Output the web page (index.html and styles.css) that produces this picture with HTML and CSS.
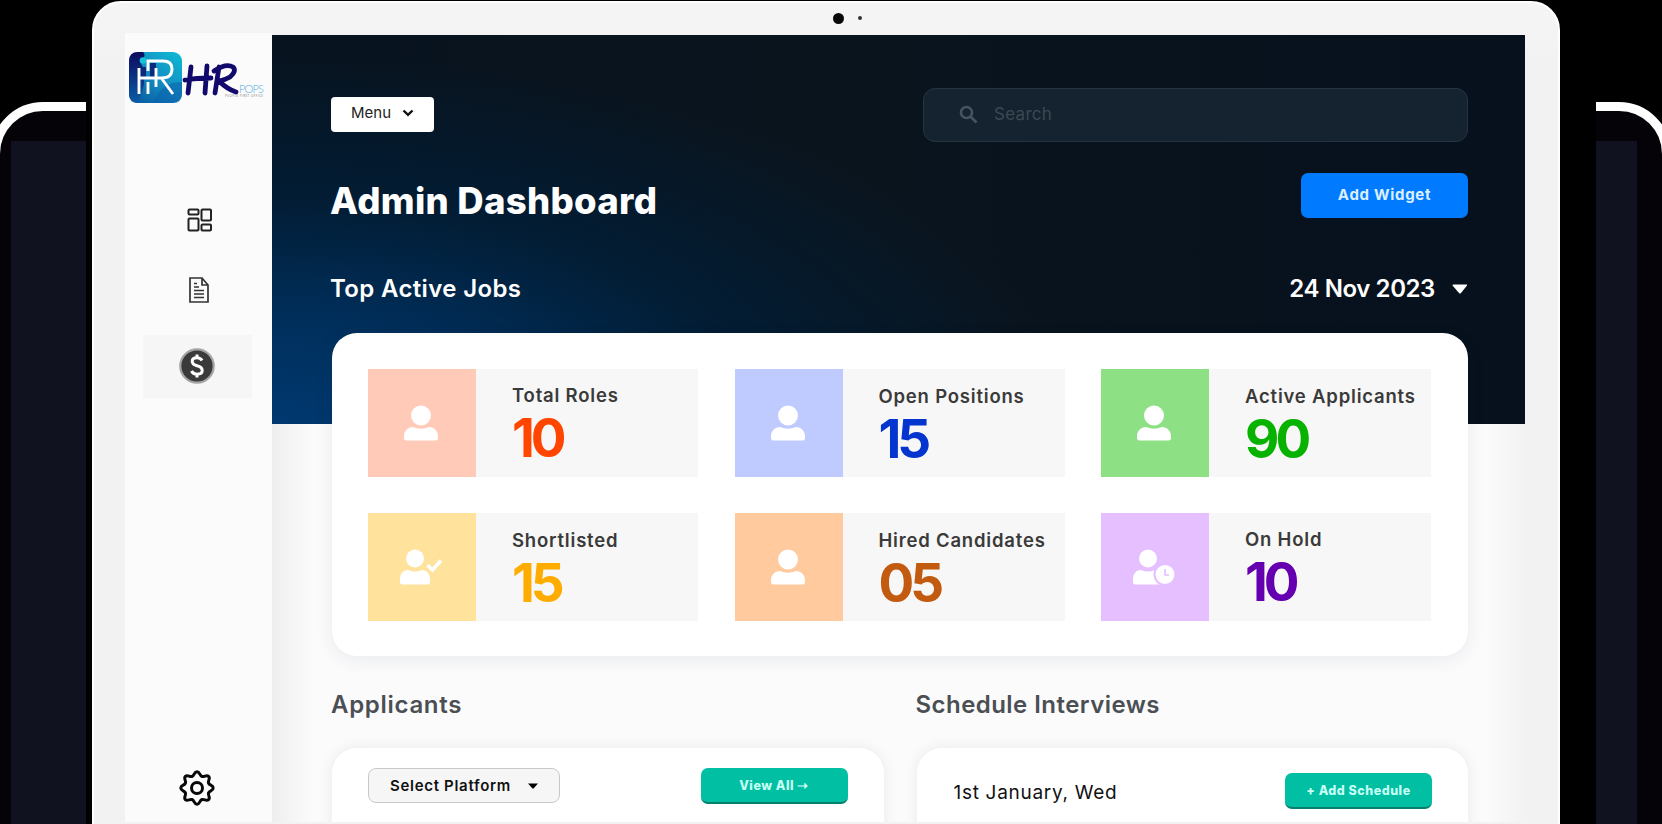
FILE: index.html
```html
<!DOCTYPE html>
<html lang="en">
<head>
<meta charset="utf-8">
<title>Admin Dashboard</title>
<link rel="stylesheet" href="styles.css">
</head>
<body>
<svg class="defs" width="0" height="0">
  <symbol id="user" viewBox="0 0 36 36">
    <circle cx="18" cy="10.500" r="10"/>
    <path d="M1 33V31C1 26 5 22 10 22Q18 25.500 26 22C31 22 35 26 35 31V33Q35 35.500 32.500 35.500H3.500Q1 35.500 1 33Z"/>
  </symbol>
</svg>
<div class="stage">
  <div class="device device-left"><div class="shell"><div class="panel"></div></div></div>
  <div class="monitor">
    <div class="camera"><i class="lens"></i><i class="sensor"></i></div>
    <div class="screen">
      <aside class="sidebar">
        <svg class="logo" viewBox="0 0 140 54" width="140" height="54">
          <defs>
            <linearGradient id="lg" x1="1" y1="0" x2="0.2" y2="1"><stop offset="0" stop-color="#0bbcd4"/><stop offset="0.5" stop-color="#1491c4"/><stop offset="1" stop-color="#0a5da3"/></linearGradient>
            <linearGradient id="dk" x1="0" y1="0" x2="0" y2="1"><stop offset="0" stop-color="#0c0a60"/><stop offset="1" stop-color="#0b5ca5"/></linearGradient>
          </defs>
          <rect x="1" y="1" width="53" height="51" rx="9" fill="url(#lg)"/>
          <path d="M10 1H15Q18 4 15 8Q11 13 16 17V34L10 52Q1 52 1 43V10Q1 1 10 1Z" fill="url(#dk)"/>
          <path d="M22 12h6v16h-6zM14 16h4v11h-4z" fill="#0d2b7d"/>
          <path d="M30 43Q38 30 54 31V43Q54 52 45 52H24Z" fill="#0c62ab" opacity=".6"/>
          <circle cx="15" cy="9.500" r="3.300" fill="#16c2dc"/>
          <g fill="none" stroke="#fff" stroke-width="2.900"><path d="M20 20V10H35Q44 10 44 18Q44 27 34 27H10M11 17V43M20 31V43M28 17V36M34 28L45 43"/></g>
          <g fill="none" stroke="#11096b" stroke-width="4.800" stroke-linecap="round" stroke-linejoin="round"><path d="M63 16L60 42M79 15L77 42M57 29Q68 27 83 27M91 16L87 42M86 20Q98 12 105 16Q109 20 102 26Q97 29 91 30Q99 38 108 41"/></g>
          <text x="111" y="42" class="logo-pops" textLength="25">POPS</text>
          <text x="97" y="46" class="logo-tag" textLength="38">PEOPLE FIRST OFFICE</text>
        </svg>
        <nav class="nav">
          <a class="nav-item"><svg width="26" height="24" viewBox="0 0 26 24" fill="none" stroke="#222" stroke-width="2"><rect x="1.500" y="1.500" width="10" height="5" rx="1"/><rect x="14.500" y="1.500" width="9.500" height="11" rx="1"/><rect x="1.500" y="10.500" width="10" height="12" rx="1"/><rect x="14.500" y="16.500" width="9.500" height="6" rx="1"/></svg></a>
          <a class="nav-item"><svg width="20" height="26" viewBox="0 0 20 26" fill="none" stroke="#333" stroke-width="1.700"><path d="M1 1H13L19 8V25H1ZM13 1V8H19" /><path d="M5 6.500H8M5 10H10M5 13.500H15M5 17H15M5 20.500H15" stroke-width="1.300"/></svg></a>
          <a class="nav-item active"><svg width="36" height="36" viewBox="0 0 36 36"><circle cx="18" cy="18" r="16.700" fill="#3a3a3a" stroke="#a4a4a4" stroke-width="2.200"/><path d="M23 12.500Q21.500 9.700 18 9.700Q13.200 9.700 13.200 13.200Q13.200 16.500 18 17.700Q23.200 19 23.200 22.500Q23.200 26.200 18 26.200Q14 26.200 12.500 23M18 6.500V10M18 26V29.500" fill="none" stroke="#fff" stroke-width="3"/></svg></a>
        </nav>
        <svg class="gear" width="36" height="36" viewBox="0 0 36 36" fill="none" stroke="#080808" stroke-width="3" stroke-linejoin="round"><path d="M18 1.800C21 1.800 20.500 5.800 23 6.500C25.500 7.200 27.500 4.300 29.600 6.400C31.700 8.500 28.800 10.500 29.500 13C30.200 15.500 34.200 15 34.200 18C34.200 21 30.200 20.500 29.500 23C28.800 25.500 31.700 27.500 29.600 29.600C27.500 31.700 25.500 28.800 23 29.500C20.500 30.200 21 34.200 18 34.200C15 34.200 15.500 30.200 13 29.500C10.500 28.800 8.500 31.700 6.400 29.600C4.300 27.500 7.200 25.500 6.500 23C5.800 20.500 1.800 21 1.800 18C1.800 15 5.800 15.500 6.500 13C7.200 10.500 4.300 8.500 6.400 6.400C8.500 4.300 10.500 7.200 13 6.500C15.500 5.800 15 1.800 18 1.800Z"/><circle cx="18" cy="18" r="5.500"/></svg>
      </aside>
      <main class="main">
        <header class="hero">
          <div class="row top">
            <button class="menu"><span class="t-menu">Menu</span><svg width="12" height="8" viewBox="0 0 12 8" fill="none" stroke="#111" stroke-width="2.400"><path d="M1.500 1.500L6 5.800L10.500 1.500"/></svg></button>
            <div class="search"><svg width="19" height="19" viewBox="0 0 19 19" fill="none" stroke="#46545f" stroke-width="2.600"><circle cx="7.500" cy="7.500" r="5.500"/><path d="M11.500 11.500L17.500 17.500"/></svg><span class="t-search">Search</span></div>
          </div>
          <div class="row title-row"><h1>Admin Dashboard</h1><button class="widget"><span>Add Widget</span></button></div>
          <div class="row sub-row"><h2 class="t-jobs">Top Active Jobs</h2><div class="date"><span class="t-date">24 Nov 2023</span><svg width="16" height="10" viewBox="0 0 16 10"><path d="M0.500 1.500Q0.500 0.500 1.500 0.500H14.500Q15.500 0.500 15 1.500L9 9Q8 10 7 9Z" fill="#fff"/></svg></div></div>
        </header>
        <section class="stats">
          <article class="stat roles"><div class="tile"><svg width="36" height="36"><use href="#user"/></svg></div><div class="info"><p>Total Roles</p><strong>10</strong></div></article>
          <article class="stat open"><div class="tile"><svg width="36" height="36"><use href="#user"/></svg></div><div class="info"><p>Open Positions</p><strong>15</strong></div></article>
          <article class="stat active-app"><div class="tile"><svg width="36" height="36"><use href="#user"/></svg></div><div class="info"><p>Active Applicants</p><strong>90</strong></div></article>
          <article class="stat short"><div class="tile"><svg width="44" height="36" viewBox="0 0 44 36"><circle cx="16" cy="9.500" r="9"/><path d="M1 33V30C1 25 4 21 9 21Q16 24 23 21C28 21 31 25 31 30V33Q31 35.500 28.500 35.500H3.500Q1 35.500 1 33Z"/><path d="M28.500 16L33.500 21L42 11.500" fill="none" stroke="#fff" stroke-width="3.600"/></svg></div><div class="info"><p>Shortlisted</p><strong>15</strong></div></article>
          <article class="stat hired"><div class="tile"><svg width="36" height="36"><use href="#user"/></svg></div><div class="info"><p>Hired Candidates</p><strong>05</strong></div></article>
          <article class="stat hold"><div class="tile"><svg width="44" height="36" viewBox="0 0 44 36"><circle cx="16" cy="9.500" r="9"/><path d="M1 33V30C1 25 4 21 9 21Q16 24 23 21C28 21 31 25 31 30V33Q31 35.500 28.500 35.500H3.500Q1 35.500 1 33Z"/><circle cx="33" cy="25.500" r="10.500" fill="#fff" stroke="#e5bfff" stroke-width="2"/><path d="M33 20V26H37" fill="none" stroke="#e5bfff" stroke-width="1.600"/></svg></div><div class="info"><p>On Hold</p><strong>10</strong></div></article>
        </section>
        <div class="panels">
          <section class="col"><h3 class="t-app">Applicants</h3><div class="card left-card"><button class="select"><span>Select Platform</span><svg width="10" height="6" viewBox="0 0 10 6"><path d="M0 0.500H10L5.500 5.500H4.500Z"/></svg></button><button class="green view"><span>View All ➝</span></button></div></section>
          <section class="col"><h3 class="t-sch">Schedule Interviews</h3><div class="card right-card"><span class="day">1st January, Wed</span><button class="green add"><span>+ Add Schedule</span></button></div></section>
        </div>
      </main>
    </div>
  </div>
  <div class="device device-right"><div class="shell"><div class="panel"></div></div></div>
</div>
</body>
</html>
```
FILE: styles.css
```css
* { box-sizing: border-box; }
body { margin: 0; background: #000; font-family: Inter, "Open Sans", sans-serif; color: #333; overflow: hidden; }
h1, h2, h3, p { margin: 0; }
button { font: inherit; border: 0; padding: 0; display: flex; align-items: center; justify-content: center; }
span, h1, h2, h3, p { white-space: nowrap; }
svg { display: block; flex: none; }
.defs { position: absolute; }
.stage { display: flex; width: 1662px; height: 824px; overflow: hidden; }
.device { padding-top: 102px; overflow: hidden; flex: none; display: flex; }
.device-left { width: 86px; margin-right: 6px; }
.device-right { width: 66px; margin-left: 36px; justify-content: flex-end; }
.shell { width: 200px; flex: none; height: 900px; background: #050307; border: 9px solid #fff; border-radius: 52px; padding-top: 30px; }
.device-left .shell { margin-left: -9px; padding-left: 11px; }
.device-right .shell { margin-right: -9px; padding-right: 25px; }
.panel { background: #11121f; height: 800px; }
.monitor { width: 1468px; height: 900px; flex: none; margin-top: 1px; border-radius: 29px 29px 0 0; background: linear-gradient(#f5f5f5, #f2f2f2 60px); border: 2px solid #fff; padding: 0 34px 0 31px; }
.camera { height: 30px; display: flex; align-items: center; justify-content: center; gap: 14px; padding-left: 46px; }
.lens { width: 11px; height: 11px; border-radius: 50%; background: #080808; }
.sensor { width: 4px; height: 4px; border-radius: 50%; background: #333; }
.screen { display: flex; height: 800px; }
.sidebar { width: 147px; flex: none; height: 789px; background: #fbfbfb; display: flex; flex-direction: column; }
.logo { margin: 18px 0 0 3px; }
.logo-pops { font: 300 11px Lato, sans-serif; fill: #58aede; }
.logo-tag { font: 3px "Open Sans", sans-serif; fill: #777; }
.nav { margin: 83px 0 0 18px; width: 109px; display: flex; flex-direction: column; }
.nav-item { height: 64px; display: flex; align-items: center; justify-content: center; padding-left: 4px; }
.nav-item:nth-child(2) { height: 76px; padding-left: 2px; }
.nav-item.active { background: #f6f6f6; height: 63px; margin-top: 7px; padding: 0 1px 1px 0; }
.gear { margin: auto auto 16px 54px; }
.main { width: 1253px; height: 787px; overflow: hidden; flex: none; background: linear-gradient(90deg, #eeeeef 0, #f5f5f5 20px, #fbfbfc 40px, #fbfbfc 1215px, #f2f2f2 1253px); margin-top: 2px; display: flex; flex-direction: column; }
.hero { height: 389px; flex: none; padding: 52px 57px 0 59px; color: #fff; background: radial-gradient(ellipse 800px 370px at 0 100%, #003970 0, #002e5a 30%, rgba(0,32,60,.75) 60%, rgba(0,22,40,0) 100%), linear-gradient(90deg, #07131f, #0a141d 45%, #07111e); }
.row { display: flex; justify-content: space-between; }
.top { height: 54px; align-items: center; padding-top: 1px; }
.menu { width: 103px; height: 35px; background: #fff; border-radius: 4px; gap: 11px; color: #222; padding-bottom: 4px; }
.t-menu { font-size: 15px; }
.search { width: 545px; height: 54px; border: 1.500px solid #243541; border-radius: 12px; background: #152330; display: flex; align-items: center; padding: 0 0 2px 35px; gap: 16px; color: #3b4852; font-size: 17px; letter-spacing: 0.300px; margin-top: 1px; }
.title-row { margin-top: 32px; height: 57px; }
h1 { font-size: 36.500px; line-height: 56px; font-weight: 800; letter-spacing: 0.300px; margin-left: -1px; }
.widget { width: 167px; height: 45px; border-radius: 7px; background: #007bff; color: #dcefff; font-size: 15px; font-weight: 700; letter-spacing: 0.700px; padding-bottom: 2px; }
.sub-row { margin-top: 41px; line-height: 36px; align-items: center; height: 36px; }
h2, h3 { font-weight: 600; font-size: 24px; }
.t-jobs { letter-spacing: 0.350px; margin-left: -1px; }
.date { display: flex; align-items: center; font-size: 24px; font-weight: 600; gap: 17px; }
.t-date { letter-spacing: -0.400px; }
.stats { margin: -91px 57px 0 60px; height: 323px; background: #fff; border-radius: 25px; display: grid; grid-template-columns: repeat(3, 330px); grid-template-rows: 108px 108px; gap: 36px 36.500px; padding: 35.500px 36px; box-shadow: 0 4px 18px rgba(40,50,60,.08); flex: none; }
.stat { display: flex; background: #f7f7f7; }
.tile { width: 108px; display: flex; align-items: center; justify-content: center; fill: #fff; padding-right: 2px; }
.info { padding: 12px 0 0 36px; }
.info p { font-size: 18.500px; line-height: 28px; font-weight: 600; color: #3a3a3a; letter-spacing: 0.800px; }
.open .info, .active-app .info, .short .info, .hired .info { padding-top: 13px; }
.info strong { display: block; font-size: 53px; line-height: 58px; font-weight: 700; letter-spacing: -4px; }
.roles .tile { background: #ffcbb8; } .roles strong { color: #ff4500; }
.open .tile { background: #bfcbff; } .open strong { color: #0435cf; }
.active-app .tile { background: #8ee085; } .active-app strong { color: #08b200; }
.short .tile { background: #ffe29c; } .short strong { color: #ffac00; }
.hired .tile { background: #ffca9d; } .hired strong { color: #c25b10; }
.hold .tile { background: #e5bfff; } .hold strong { color: #6500b0; }
.panels { display: flex; gap: 33px; margin: 0 57px 0 60px; padding-top: 31px; }
.col { flex: 1; }
h3 { line-height: 36px; color: #4b4f54; margin-left: -1px; }
.t-app { letter-spacing: 0.700px; }
.t-sch { letter-spacing: 0.450px; }
.card { margin-top: 25px; height: 150px; background: #fff; border-radius: 25px; padding: 20px 36px; box-shadow: 0 0 14px rgba(40,50,70,.09); display: flex; justify-content: space-between; align-items: flex-start; }
.select { width: 192px; height: 35px; border: 1.500px solid #c9c9c9; border-radius: 8px; background: #f6f6f6; color: #111; font-size: 15px; font-weight: 600; letter-spacing: 0.700px; gap: 17px; }
.green { width: 147px; height: 36px; border-radius: 7px; background: #00bfa3; border-bottom: 2px solid #06806e; color: #c8fff5; font-size: 12.500px; font-weight: 800; letter-spacing: 0.500px; }
.right-card { padding-top: 25px; }
.day { font-size: 19px; line-height: 39px; color: #111; letter-spacing: 0.700px; padding-left: 1px; }
```
